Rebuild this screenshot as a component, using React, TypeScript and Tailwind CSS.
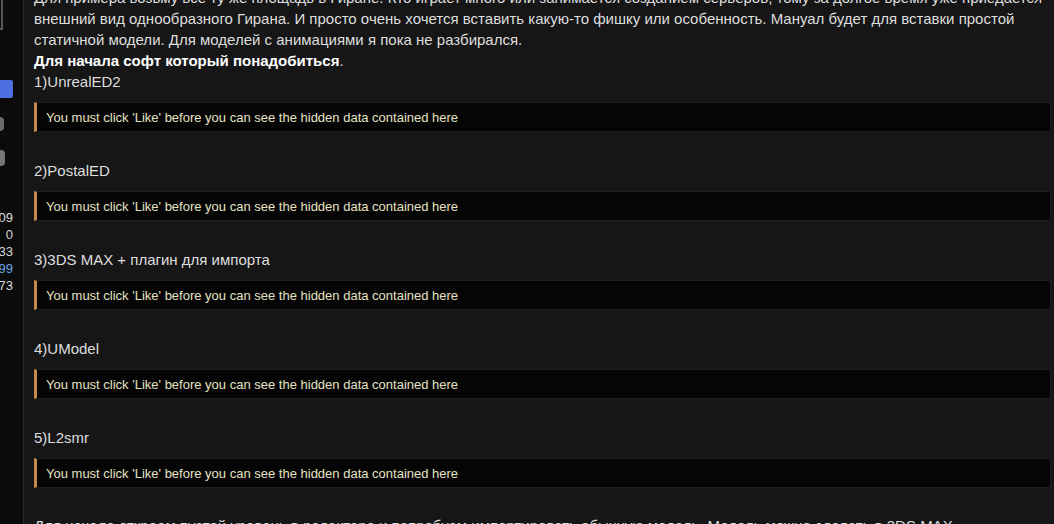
const font = { fontFamily: '"Segoe UI", "Liberation Sans", "Noto Sans", sans-serif' };

const items = ["1)UnrealED2", "2)PostalED", "3)3DS MAX + плагин для импорта", "4)UModel", "5)L2smr"];

function Hidden() {
  return (
    <div className="mt-[10px] flex h-[30px] items-center border border-[#1e1e1e] border-l-[3px] border-l-[#c48a4a] bg-[#050505] pl-[9px] text-[13px] text-[#e6e2c3]">
      You must click 'Like' before you can see the hidden data contained here
    </div>
  );
}

export default function App() {
  return (
    <div className="flex h-[524px] w-[1054px] overflow-hidden bg-[#161616]" style={font}>
      <aside className="relative h-full w-[24px] shrink-0 border-r border-[#2a2a2a] bg-[#0b0b0b]">
        <div className="absolute left-0 top-[-4px] h-[34px] w-[3px] border-r-2 border-b-2 border-[#555]" />
        <div className="absolute left-0 top-[80px] h-[18px] w-[13px] rounded-r-[2px] bg-[#4d6fe0]" />
        <div className="absolute left-0 top-[117px] h-[14px] w-[4px] rounded-r bg-[#6a6a6a]" />
        <div className="absolute left-0 top-[150px] h-[16px] w-[5px] rounded-r bg-[#777]" />
        <div className="absolute right-[10px] top-[209px] flex flex-col items-end text-[13px] leading-[17px] text-[#d8d8d8]">
          <span>09</span>
          <span>0</span>
          <span>33</span>
          <span className="text-[#6aa7e8]">99</span>
          <span>73</span>
        </div>
      </aside>
      <main className="mt-[-13px] min-w-0 flex-1 pl-[10px] pr-[3px] text-[15px] leading-[21px] text-[#dedede]">
        <p className="whitespace-nowrap">
          Для примера возьму все ту же площадь в Гиране. Кто играет много или занимается созданием серверов, тому за долгое время уже приедается
          <br />
          внешний вид однообразного Гирана. И просто очень хочется вставить какую-то фишку или особенность. Мануал будет для вставки простой
          <br />
          статичной модели. Для моделей с анимациями я пока не разбирался.
          <br />
          <b className="font-bold text-white">Для начала софт который понадобиться</b>.
        </p>
        {items.map((item, i) => (
          <div key={item} className={i === 0 ? "" : "mt-[28px]"}>
            <div>{item}</div>
            <Hidden />
          </div>
        ))}
        <p className="mt-[27px] whitespace-nowrap">
          Для начала откроем пустой уровень в редакторе и попробуем импортировать обычную модель. Модель можно сделать в 3DS MAX
        </p>
      </main>
    </div>
  );
}
